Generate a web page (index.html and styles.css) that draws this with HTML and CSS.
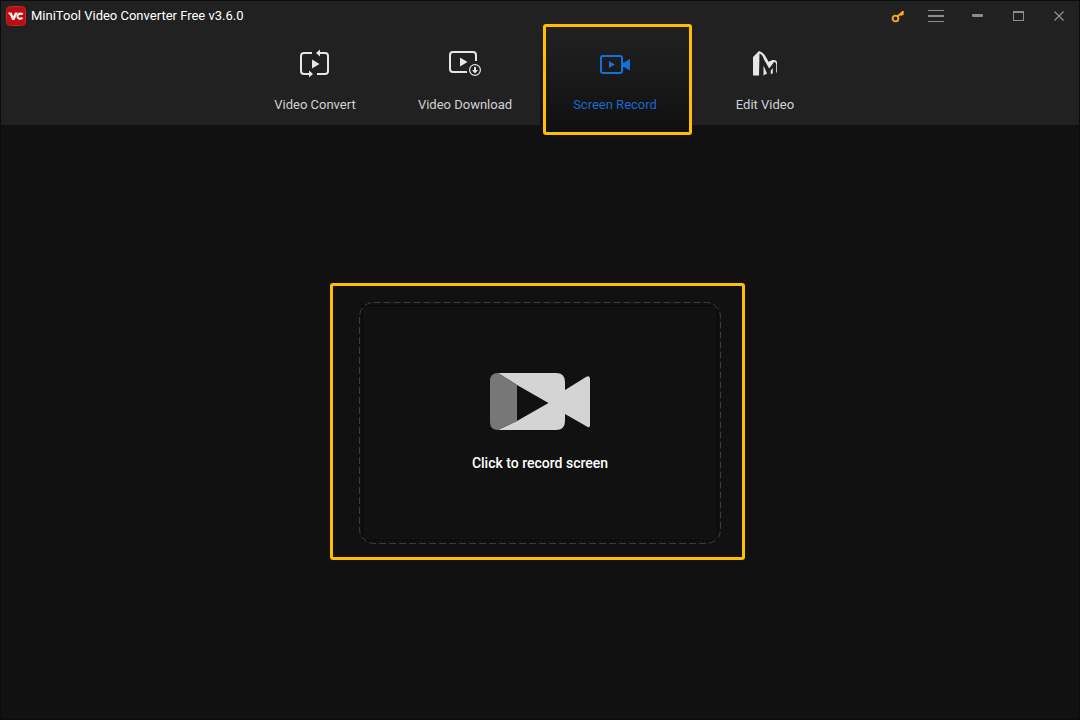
FILE: index.html
```html
<!DOCTYPE html>
<html lang="en">
<head>
<meta charset="utf-8">
<title>MiniTool Video Converter Free v3.6.0</title>
<link rel="stylesheet" href="styles.css">
</head>
<body>
<div class="app">
  <header class="header">
    <div class="titlebar">
      <svg class="logo" width="20" height="20" viewBox="0 0 20 20" aria-hidden="true">
        <rect x=".5" y=".5" width="19" height="19" rx="4" fill="#b80f14" stroke="#dc1c20"/>
        <path d="M2 6.500H5.500L7.300 10.300 9 6.500H11.800L8.500 14H6.200L4 9Q2.500 8.500 2 6.500z" fill="#f4e4e4"/>
        <path d="M16.800 8.300c-1.200-1-3.600-1-4.600.2-1.200 1.500-.8 3.500.8 4 1.200.4 2.600.1 3.400-.7" fill="none" stroke="#f4e4e4" stroke-width="2.200"/>
      </svg>
      <h1 class="title">MiniTool Video Converter Free v3.6.0</h1>
      <div class="controls">
        <button class="control control-key" aria-label="Register">
          <svg width="14" height="14" viewBox="0 0 14 14" fill="none" stroke="#f5a81c">
            <circle cx="4.500" cy="9.500" r="2.900" stroke-width="1.900"/>
            <path d="M6.500 7.500 12 2.700" stroke-width="2"/>
            <path d="M9.500 5 11 6.700M11.800 2v4" stroke-width="1.800"/>
          </svg>
        </button>
        <button class="control" aria-label="Menu">
          <svg width="16" height="12" viewBox="0 0 16 12" fill="#8d8d8d"><path d="M0 0h16v1H0zM0 5h16v2H0zM0 11h16v1H0z"/></svg>
        </button>
        <button class="control" aria-label="Minimize">
          <svg width="12" height="12" viewBox="0 0 12 12"><rect y="4" x="1" width="11" height="3" rx="1" fill="#8d8d8d"/></svg>
        </button>
        <button class="control" aria-label="Maximize">
          <svg width="12" height="12" viewBox="0 0 12 12"><path d="M1 1h11v10H1zM2 3v7h9V3z" fill="#8d8d8d" fill-rule="evenodd"/></svg>
        </button>
        <button class="control" aria-label="Close">
          <svg width="12" height="12" viewBox="0 0 12 12"><path d="m1.500 1.500 9 9m0-9-9 9" stroke="#8d8d8d" stroke-width="1.400"/></svg>
        </button>
      </div>
    </div>
    <nav class="tabs">
      <button class="tab">
        <svg width="34" height="30" viewBox="0 0 34 30" fill="none" stroke="#e6e6e6" stroke-width="2">
          <path d="M14 5H6Q3 5 3 8v15q0 3 3 3h6M19 26h8q3 0 3-3V8q0-3-3-3h-6"/>
          <path d="m18 5 4-3.500v7zM15 26l-4-3.500v7z" fill="#e6e6e6" stroke="none"/>
          <path d="M14 11.500v9l7.500-4.500z" fill="#e6e6e6" stroke="none"/>
        </svg>
        <span>Video Convert</span>
      </button>
      <button class="tab">
        <svg width="34" height="30" viewBox="0 0 34 30" fill="none" stroke="#e6e6e6" stroke-width="2">
          <path d="M19 24H5q-3 0-3-3V7q0-3 3-3h20q3 0 3 3v6"/>
          <path d="M12 9.500v9l7.500-4.500z" fill="#e6e6e6" stroke="none"/>
          <circle cx="27" cy="22" r="5.400" stroke-width="1.200"/>
          <path d="M27 19v3" stroke-width="2"/>
          <path d="M24 22h6l-3 3.500z" fill="#e6e6e6" stroke="none"/>
        </svg>
        <span>Video Download</span>
      </button>
      <button class="tab tab-active" aria-current="page">
        <svg width="34" height="30" viewBox="0 0 34 30" fill="none" stroke="#1570dc" stroke-width="2">
          <rect x="3" y="8" width="21" height="17" rx="2"/>
          <path d="M11 13v7l6-3.500z" fill="#1570dc" stroke="none"/>
          <path d="M32 11v11.500L26 19h-2v-4.500h2z" fill="#1570dc" stroke="none"/>
        </svg>
        <span>Screen Record</span>
        <i class="highlight highlight-tab"></i>
      </button>
      <button class="tab">
        <svg width="34" height="30" viewBox="0 0 34 30" fill="#e6e6e6">
          <path d="M5 9 11 3Q16 4.500 18.500 10L20.500 13.800 24.500 12Q28.500 11.500 29 14V24L28.200 25V16.500Q28 13.500 26 14L21.200 20.500 16 11.500Q14.500 6.500 11.500 5.500L11 27.500H5z"/>
          <path d="M15.500 17.500 19 25.500 15.500 27.500zM24.800 20V25.200L22.800 26.200V22.500z"/>
        </svg>
        <span>Edit Video</span>
      </button>
    </nav>
  </header>
  <main class="stage">
    <div class="drop-wrap">
      <button class="drop">
        <svg class="dashes" width="100%" height="100%" aria-hidden="true"><rect class="dash-line" rx="14"/></svg>
        <svg width="100" height="58" viewBox="0 0 100 58" aria-hidden="true">
          <path d="M8 0H66Q75 0 75 9V17L96 4Q100 2 100 6V52Q100 56 96 53L75 41V48Q75 57 66 57H8L27 48 58.500 30 27 12z" fill="#d4d4d4"/>
          <path d="M8 0 27 12V48L8 57Q0 57 0 49V8Q0 0 8 0z" fill="#777"/>
        </svg>
        <span class="drop-label">Click to record screen</span>
      </button>
      <i class="highlight highlight-drop"></i>
    </div>
  </main>
</div>
</body>
</html>
```

FILE: styles.css
```css
* {
  box-sizing: border-box;
}

body {
  margin: 0;
  background: #111;
  color: #fff;
  font-family: Roboto, "Liberation Sans", sans-serif;
  font-size: 13px;
}

button {
  margin: 0;
  padding: 0;
  border: 0;
  background: none;
  color: inherit;
  font: inherit;
}

svg {
  display: block;
}

.app {
  display: flex;
  flex-direction: column;
  min-height: 100vh;
  border: 1px solid #0c0c0c;
}

.header {
  background: #212121;
}

.titlebar {
  display: flex;
  align-items: center;
  height: 30px;
  padding-left: 5px;
}

.title {
  margin: 0 0 0 5px;
  font-size: 13px;
  font-weight: 400;
  line-height: 20px;
}

.controls {
  display: flex;
  margin-left: auto;
}

.control {
  display: flex;
  align-items: center;
  justify-content: center;
  width: 41px;
  height: 30px;
}

.control-key {
  width: 34px;
}

.tabs {
  display: flex;
  justify-content: center;
}

.tab {
  position: relative;
  display: flex;
  flex-direction: column;
  align-items: center;
  gap: 18px;
  width: 150px;
  height: 94px;
  padding-top: 17px;
  color: #d2d2d2;
  line-height: 18px;
}

.tab-active {
  background: linear-gradient(#212121, #111);
  color: #1a69cc;
}

.highlight {
  position: absolute;
  border: 3px solid #ffbe00;
  border-radius: 3px;
  pointer-events: none;
}

.highlight-tab {
  inset: -7px -2px -10px 3px;
}

.stage {
  display: flex;
  flex: 1;
  align-items: center;
  justify-content: center;
  padding-top: 2px;
}

.drop-wrap {
  position: relative;
}

.highlight-drop {
  inset: -19px -24px -16px -29px;
}

.drop {
  position: relative;
  display: flex;
  flex-direction: column;
  align-items: center;
  gap: 22px;
  width: 362px;
  height: 242px;
  padding-top: 71px;
  outline: 1px dotted #000;
  outline-offset: -4px;
}

.dashes {
  position: absolute;
  inset: 0;
}

.dash-line {
  x: 0.5px;
  y: 0.5px;
  width: calc(100% - 1px);
  height: calc(100% - 1px);
  fill: none;
  stroke: #3c3c3c;
  stroke-dasharray: 7 3;
}

.drop-label {
  font-size: 14px;
  font-weight: 500;
  line-height: 20px;
}
```
